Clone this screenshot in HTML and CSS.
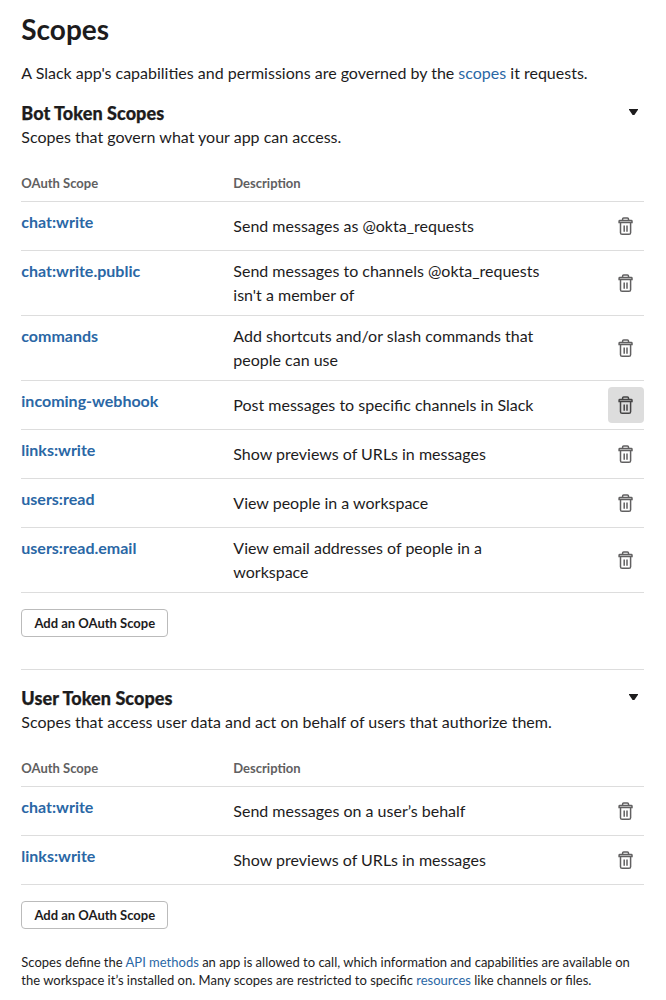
FILE: index.html
```
<!DOCTYPE html>
<html lang="en">
<head>
<meta charset="utf-8">
<title>Scopes</title>
<link rel="stylesheet" href="styles.css">
</head>
<body>
<svg class="defs" aria-hidden="true">
  <symbol id="trash" viewBox="0 0 18 20">
    <path d="M2.8 4.5h11.5q.7 0 .7.7v1.3H2.1V5.2q0-.7.7-.7zM5.6 4.3V3q0-1.1 1.1-1.1h3.7q1.1 0 1.1 1.1v1.3M3.5 6.7v10q0 1.6 1.6 1.6h6.9q1.6 0 1.6-1.6v-10M7.2 9.5V15.7M10 9.5v6.2"/>
  </symbol>
</svg>
<main class="page">
  <h1 class="title">Scopes</h1>
  <p class="intro">A Slack app's capabilities and permissions are governed by the <a href="#">scopes</a> it requests.</p>

  <section class="group">
    <header class="group-head"><h2>Bot Token Scopes</h2><span class="caret"></span></header>
    <p class="sub">Scopes that govern what your app can access.</p>
    <div class="table">
      <div class="row head"><span>OAuth Scope</span><span>Description</span></div>
      <div class="row"><a href="#">chat:write</a><p>Send messages as @okta_requests</p><button class="del" aria-label="Delete"><svg><use href="#trash"/></svg></button></div>
      <div class="row"><a href="#">chat:write.public</a><p>Send messages to channels @okta_requests<br>isn't a member of</p><button class="del" aria-label="Delete"><svg><use href="#trash"/></svg></button></div>
      <div class="row"><a href="#">commands</a><p>Add shortcuts and/or slash commands that<br>people can use</p><button class="del" aria-label="Delete"><svg><use href="#trash"/></svg></button></div>
      <div class="row"><a href="#">incoming-webhook</a><p>Post messages to specific channels in Slack</p><button class="del active" aria-label="Delete"><svg><use href="#trash"/></svg></button></div>
      <div class="row"><a href="#">links:write</a><p>Show previews of URLs in messages</p><button class="del" aria-label="Delete"><svg><use href="#trash"/></svg></button></div>
      <div class="row"><a href="#">users:read</a><p>View people in a workspace</p><button class="del" aria-label="Delete"><svg><use href="#trash"/></svg></button></div>
      <div class="row"><a href="#">users:read.email</a><p>View email addresses of people in a<br>workspace</p><button class="del" aria-label="Delete"><svg><use href="#trash"/></svg></button></div>
    </div>
    <button class="add">Add an OAuth Scope</button>
  </section>

  <section class="group second">
    <header class="group-head"><h2>User Token Scopes</h2><span class="caret"></span></header>
    <p class="sub">Scopes that access user data and act on behalf of users that authorize them.</p>
    <div class="table">
      <div class="row head"><span>OAuth Scope</span><span>Description</span></div>
      <div class="row"><a href="#">chat:write</a><p>Send messages on a user’s behalf</p><button class="del" aria-label="Delete"><svg><use href="#trash"/></svg></button></div>
      <div class="row"><a href="#">links:write</a><p>Show previews of URLs in messages</p><button class="del" aria-label="Delete"><svg><use href="#trash"/></svg></button></div>
    </div>
    <button class="add">Add an OAuth Scope</button>
  </section>

  <p class="foot">Scopes define the <a href="#">API methods</a> an app is allowed to call, which information and capabilities are available on<br>the workspace it’s installed on. Many scopes are restricted to specific <a href="#">resources</a> like channels or files.</p>
</main>
</body>
</html>
```
FILE: styles.css
```
* { box-sizing: border-box; }
body { margin: 0; background: #fff; color: #1d1c1d; font: 16px/24px Lato, sans-serif; }
h1, h2, p { margin: 0; }
a { color: #2a67a5; text-decoration: none; }
.defs { display: none; }
.page { padding: 11px 22px 0 21.3px; }
.title { font-size: 28px; line-height: 36px; font-weight: 700; }
.intro { margin-top: 14px; }
.group { margin-top: 16px; }
.group-head { display: flex; justify-content: space-between; align-items: center; height: 24px; }
.group-head h2 { font-size: 18px; line-height: 24px; font-weight: 900; letter-spacing: 0.06px; -webkit-text-stroke: 0.25px #1d1c1d; }
.caret { margin: 0 6px 2px 0; width: 9px; height: 6px; background: #1d1c1d; clip-path: polygon(0 0, 100% 0, 100% 12%, 60% 100%, 40% 100%, 0 12%); }
.table { margin-top: 16px; }
.row { display: grid; grid-template-columns: 212px 338px 1fr; align-items: center; min-height: 49px; padding: 8px 0; border-bottom: 1px solid #ddd; }
.row > a { align-self: start; font-weight: 700; }
.row.head { min-height: 0; height: 37px; padding: 0; font-size: 13px; font-weight: 700; color: #616061; }
.del { justify-self: end; display: flex; align-items: center; justify-content: center; width: 36px; height: 36px; margin: -2px 0; padding: 0; border: 0; border-radius: 4px; background: none; }
.del.active { background: #ddd; }
.del svg { width: 18px; height: 20px; fill: none; stroke: #616061; stroke-width: 1.5; }
.del.active svg { stroke: #454445; }
.add { display: block; width: 147px; height: 28px; margin-top: 16px; padding: 0; border: 1px solid #bbb; border-radius: 4px; background: #fff; color: #1d1c1d; font: 700 13px/24px Lato, sans-serif; }
.second { margin-top: 32px; padding-top: 16px; border-top: 1px solid #ddd; }
.foot { margin-top: 24px; font-size: 13px; line-height: 18px; }
```
